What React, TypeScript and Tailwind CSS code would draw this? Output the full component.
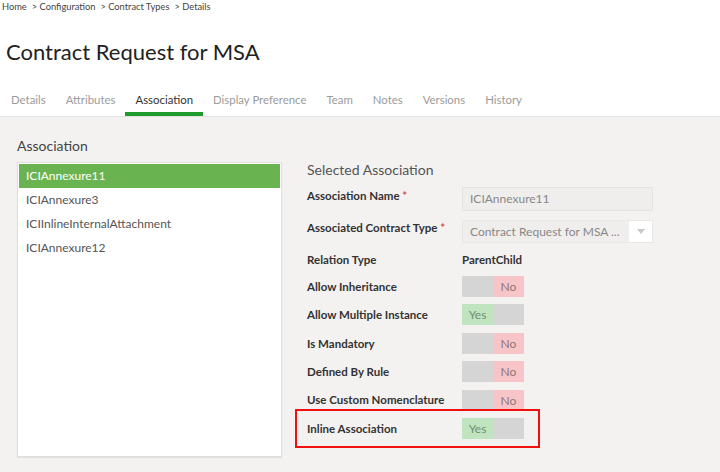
import React from "react";

const tabs = [
  "Details",
  "Attributes",
  "Association",
  "Display Preference",
  "Team",
  "Notes",
  "Versions",
  "History",
];

const associations = [
  "ICIAnnexure11",
  "ICIAnnexure3",
  "ICIInlineInternalAttachment",
  "ICIAnnexure12",
];

function Toggle({ on }: { on: boolean }) {
  return (
    <div className="flex h-[21px] w-[62px] text-[12px] leading-[21px] text-[#8a8a8a]">
      {on ? (
        <>
          <div className="w-[31px] bg-[#bfe4bf] text-center text-[#6f8f6f]">Yes</div>
          <div className="w-[31px] bg-[#d5d5d5]" />
        </>
      ) : (
        <>
          <div className="w-[31px] bg-[#d5d5d5]" />
          <div className="w-[31px] bg-[#f7c4c8] text-center text-[#8f7777]">No</div>
        </>
      )}
    </div>
  );
}

const flags: { label: string; on: boolean }[] = [
  { label: "Allow Inheritance", on: false },
  { label: "Allow Multiple Instance", on: true },
  { label: "Is Mandatory", on: false },
  { label: "Defined By Rule", on: false },
  { label: "Use Custom Nomenclature", on: false },
];

export default function App() {
  return (
    <div
      className="flex h-[472px] w-[720px] flex-col overflow-hidden bg-white text-[#333]"
      style={{ fontFamily: "Lato, 'Open Sans', sans-serif" }}
    >
      {/* breadcrumb */}
      <div className="flex h-[13px] items-center gap-[5px] pl-[2px] text-[9.3px] leading-[13px] text-[#444]">
        <span>Home</span>
        <span>&gt; Configuration</span>
        <span>&gt; Contract Types</span>
        <span>&gt; Details</span>
      </div>

      <h1 className="mt-[26px] pl-[6px] text-[22px] leading-[26px] text-[#222]">
        Contract Request for MSA
      </h1>

      {/* tabs */}
      <div className="mt-[24px] flex h-[28px] border-b border-[#e2e2e2] pl-[1px]">
        {tabs.map((t) => (
          <div
            key={t}
            className={
              t === "Association"
                ? "border-b-[4px] border-[#1f9a2e] px-[10px] pt-[3px] text-[11.4px] leading-[16px] text-[#333]"
                : "px-[10px] pt-[3px] text-[11.4px] leading-[16px] text-[#9b9b9b]"
            }
          >
            {t}
          </div>
        ))}
      </div>

      {/* panel */}
      <div className="flex flex-1 bg-[#f3f2f1] pl-[17px] pt-[20px]">
        <div className="flex w-[265px] flex-col">
          <div className="h-[18px] text-[14px] leading-[18px] text-[#444]">Association</div>
          <div className="mt-[7px] h-[295px] border border-[#e0e0e0] bg-white p-[1px] shadow-[0_1px_1px_rgba(0,0,0,0.08)]">
            {associations.map((a, i) => (
              <div
                key={a}
                className={
                  i === 0
                    ? "h-[24px] bg-[#69b450] pl-[7px] text-[12px] leading-[24px] text-white"
                    : "h-[24px] pl-[7px] text-[12px] leading-[24px] text-[#555]"
                }
              >
                {a}
              </div>
            ))}
          </div>
        </div>

        <div className="ml-[25px] flex flex-col pt-[24px]">
          <div className="h-[18px] text-[14px] leading-[18px] text-[#555]">Selected Association</div>

          <div className="mt-[8px] flex">
            <div className="w-[155px] pt-[2px] text-[11.5px] font-bold leading-[14px]">
              Association Name <span className="text-[#d9534f]">*</span>
            </div>
            <div className="flex h-[24px] w-[191px] items-center border border-[#e4e3e2] bg-[#efeeed] pl-[7px] text-[12px] text-[#888]">
              ICIAnnexure11
            </div>
          </div>

          <div className="mt-[9px] flex">
            <div className="w-[155px] pt-[1px] text-[11.5px] font-bold leading-[14px]">
              Associated Contract Type <span className="text-[#d9534f]">*</span>
            </div>
            <div className="flex h-[23px] w-[191px] items-center border border-[#e8e7e6] bg-[#efeeed] text-[12px] text-[#888]">
              <span className="flex-1 pl-[7px]">Contract Request for MSA ...</span>
              <span className="flex h-full w-[23px] items-center justify-center bg-white">
                <svg width="8" height="5" viewBox="0 0 8 5">
                  <path d="M0 0h8L4 5z" fill="#c8c8c8" />
                </svg>
              </span>
            </div>
          </div>

          <div className="mt-[8px] flex h-[18px] items-center text-[11.5px] font-bold">
            <div className="w-[155px]">Relation Type</div>
            <div>ParentChild</div>
          </div>

          <div className="mt-[7px] flex flex-col">
            {flags.map((f) => (
              <div key={f.label} className="flex h-[28.4px] items-start">
                <div className="flex h-[21px] w-[155px] items-center text-[11.5px] font-bold">{f.label}</div>
                <Toggle on={f.on} />
              </div>
            ))}
            <div className="relative flex h-[28.4px] items-start">
              <div className="flex h-[21px] w-[155px] items-center text-[11.5px] font-bold">Inline Association</div>
              <Toggle on />
              <div className="absolute left-[-12px] top-[-9px] h-[39px] w-[245px] border-2 border-[#f01010]" />
            </div>
          </div>
        </div>
      </div>
    </div>
  );
}
